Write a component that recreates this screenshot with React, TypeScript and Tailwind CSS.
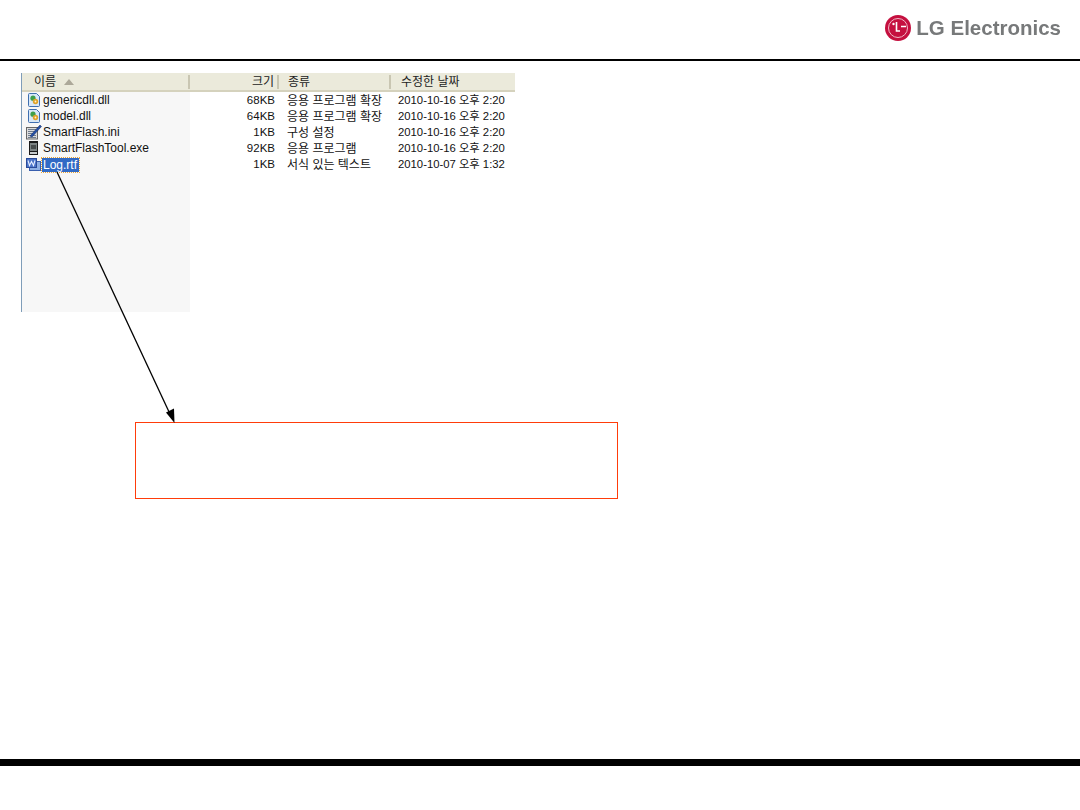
import React from 'react';

const files = [
  { name: 'genericdll.dll', size: '68KB', type: '응용 프로그램 확장', date: '2010-10-16 오후 2:20', icon: 'dll' },
  { name: 'model.dll', size: '64KB', type: '응용 프로그램 확장', date: '2010-10-16 오후 2:20', icon: 'dll' },
  { name: 'SmartFlash.ini', size: '1KB', type: '구성 설정', date: '2010-10-16 오후 2:20', icon: 'ini' },
  { name: 'SmartFlashTool.exe', size: '92KB', type: '응용 프로그램', date: '2010-10-16 오후 2:20', icon: 'exe' },
  { name: 'Log.rtf', size: '1KB', type: '서식 있는 텍스트', date: '2010-10-07 오후 1:32', icon: 'rtf' },
];

const FileIcon = ({ kind }: { kind: string }) => {
  if (kind === 'dll') {
    return (
      <svg width="16" height="16" viewBox="0 0 16 16" className="shrink-0">
        <path d="M3.5 1.5h7l3 3v9a1 1 0 0 1-1 1h-9a1 1 0 0 1-1-1v-11a1 1 0 0 1 1-1z" fill="#d8e8f8" stroke="#3f6fb0" />
        <circle cx="7" cy="6.2" r="2.6" fill="#3f9f4a" />
        <circle cx="9.5" cy="9.5" r="2.7" fill="#dfa32c" />
        <circle cx="9.5" cy="9.5" r="0.9" fill="#fff2c8" />
      </svg>
    );
  }
  if (kind === 'ini') {
    return (
      <svg width="16" height="16" viewBox="0 0 16 16" className="shrink-0">
        <rect x="0.5" y="3.5" width="11" height="11.5" fill="#dcdcdc" stroke="#666" />
        <path d="M2 5.5h8M2 7.5h7M2 9.5h6M2 11.5h8M2 13.5h8" stroke="#6f7d8f" />
        <path d="M4 12 14 1l1.5 1.5L6 13z" fill="#2450a8" stroke="#0f2558" strokeWidth="0.5" />
      </svg>
    );
  }
  if (kind === 'exe') {
    return (
      <svg width="16" height="16" viewBox="0 0 16 16" className="shrink-0">
        <rect x="3" y="1" width="9" height="14" fill="#1a1a1a" />
        <rect x="4" y="3" width="7" height="8" fill="#7d8484" />
        <rect x="5" y="5" width="5" height="4" fill="#474c4c" />
        <rect x="4" y="12" width="7" height="2" fill="#c8cccc" />
      </svg>
    );
  }
  return (
    <svg width="16" height="16" viewBox="0 0 16 16" className="shrink-0">
      <rect x="3.5" y="5.5" width="11" height="9" fill="#8fb0e4" stroke="#3a5fae" />
      <rect x="0.5" y="2.5" width="10" height="9" fill="#4b74c8" stroke="#2a4a98" />
      <path d="M2 4.5 3.5 9.5 5.5 5.5 7.5 9.5 9 4.5" fill="none" stroke="#e6eeff" strokeWidth="1.1" />
    </svg>
  );
};

export default function App() {
  return (
    <div className="relative flex h-[810px] w-[1080px] flex-col overflow-hidden bg-white font-['Liberation_Sans','Noto_Sans_CJK_KR',sans-serif]">
      {/* Header */}
      <div className="flex h-[61px] shrink-0 items-center justify-end border-b-2 border-black pr-[19px] pb-[3px]">
        <div className="flex items-center gap-[5px] blur-[0.5px]">
          <svg width="26" height="26" viewBox="0 0 26 26">
            <circle cx="13" cy="13" r="13" fill="#c5103f" />
            <circle cx="13" cy="13" r="9.5" fill="none" stroke="#f0b8c6" strokeWidth="1" />
            <path d="M11.5 7v9h3.5M16 11.5h5" fill="none" stroke="#fff" strokeWidth="1.6" />
            <circle cx="8.5" cy="9" r="1.2" fill="#fff" />
          </svg>
          <span className="text-[20.5px] leading-none font-bold text-[#77797a]">LG Electronics</span>
        </div>
      </div>

      {/* File list */}
      <div className="mt-[12px] ml-[21px] flex h-[239px] w-[494px] shrink-0 flex-col border-l border-[#7f9db9] text-[12px] text-[#111]">
        <div className="flex h-[19px] shrink-0 items-center border-b-2 border-[#d5d2bd] bg-[#ebeadb] text-[#222]">
          <div className="flex h-[14px] w-[168px] items-center gap-[8px] border-r-2 border-[#c9c6b2] pl-[12px]">
            <span>이름</span>
            <svg width="10" height="6" viewBox="0 0 10 6">
              <path d="M5 0 10 6H0z" fill="#aca899" />
            </svg>
          </div>
          <div className="flex h-[14px] w-[89px] items-center justify-end border-r-2 border-[#c9c6b2] pr-[3px]">크기</div>
          <div className="flex h-[14px] w-[112px] items-center border-r-2 border-[#c9c6b2] pl-[9px]">종류</div>
          <div className="pl-[10px]">수정한 날짜</div>
        </div>
        <div className="flex min-h-0 flex-1 bg-[linear-gradient(to_right,#f7f7f7_168px,#ffffff_168px)]">
          <div className="flex w-full flex-col">
            {files.map((f) => (
              <div key={f.name} className="flex h-[16px] items-center leading-none">
                <div className="flex w-[168px] items-center gap-[1px] pl-[4px]">
                  <FileIcon kind={f.icon} />
                  {f.icon === 'rtf' ? (
                    <span className="-ml-[2px] flex h-[16px] w-[39px] translate-y-[1px] items-center border border-dotted border-[#e8a33a] bg-[#316ac5] bg-clip-padding pl-[1px] text-white">
                      {f.name}
                    </span>
                  ) : (
                    <span>{f.name}</span>
                  )}
                </div>
                <div className="w-[85px] pt-[1px] text-right text-[11.5px]">{f.size}</div>
                <div className="w-[112px] pt-[1px] pl-[12px]">{f.type}</div>
                <div className="pt-[1px] pl-[11px] text-[11.3px] whitespace-nowrap">{f.date}</div>
              </div>
            ))}
          </div>
        </div>
      </div>

      {/* Empty callout */}
      <div className="mt-[110px] ml-[135px] h-[77px] w-[483px] shrink-0 border border-[#ff3c0a]" />

      {/* Footer bar */}
      <div className="mt-[260px] h-[7px] w-full shrink-0 bg-black" />

      {/* Arrow from Log.rtf to the callout */}
      <svg className="absolute top-0 left-0" width="1080" height="810">
        <line x1="57" y1="172" x2="170" y2="414" stroke="#000" strokeWidth="1.3" />
        <path d="M174.5 423 L166 412.5 L174 408.5 Z" fill="#000" />
      </svg>
    </div>
  );
}
